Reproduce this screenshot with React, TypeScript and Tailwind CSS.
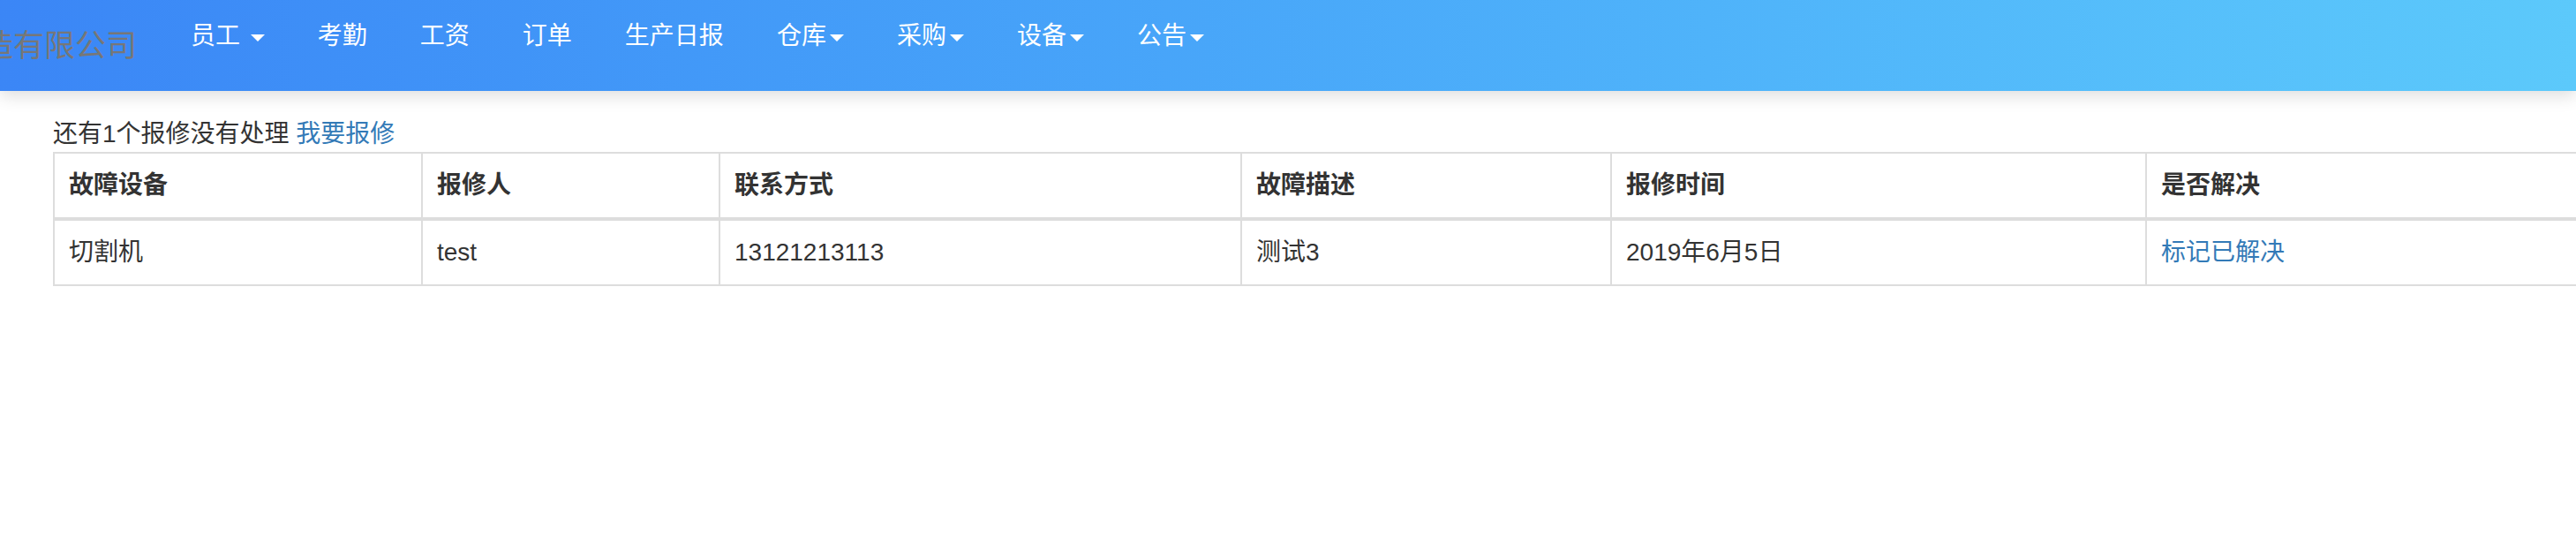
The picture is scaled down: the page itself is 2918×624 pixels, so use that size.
import React from "react";

const navItems: { label: string; caret: boolean; space?: boolean }[] = [
  { label: "员工", caret: true, space: true },
  { label: "考勤", caret: false },
  { label: "工资", caret: false },
  { label: "订单", caret: false },
  { label: "生产日报", caret: false },
  { label: "仓库", caret: true },
  { label: "采购", caret: true },
  { label: "设备", caret: true },
  { label: "公告", caret: true },
];

function Caret() {
  return (
    <span className="ml-[4px] inline-block h-0 w-0 border-x-[8px] border-t-[8px] border-x-transparent border-t-white align-middle" />
  );
}

export default function App() {
  return (
    <div
      className="min-h-[624px] w-full overflow-hidden bg-white text-[28px] text-[#333]"
      style={{ fontFamily: '"Liberation Sans", "Noto Sans CJK SC", sans-serif' }}
    >
      <nav className="relative z-10 flex h-[103px] bg-gradient-to-r from-[#3b86f6] to-[#5cc9fb] shadow-[0_6px_18px_rgba(0,0,0,0.13)]">
        <div className="ml-[-55px] shrink-0 whitespace-nowrap pr-[31px] pt-[32px] text-[35px] leading-[40px] text-[#777]">
          制造有限公司
        </div>
        <ul className="flex">
          {navItems.map((item) => (
            <li key={item.label}>
              <a className="block whitespace-nowrap px-[30px] pt-[21px] leading-[40px] text-white">
                {item.label}
                {item.space ? " " : ""}
                {item.caret ? <Caret /> : null}
              </a>
            </li>
          ))}
        </ul>
      </nav>

      <div className="pt-[29px]">
        <p className="pl-[60px] leading-[40px]">
          还有1个报修没有处理 <a className="text-[#337ab7]">我要报修</a>
        </p>
        <table className="ml-[60px] w-[3000px] table-fixed border-separate border-spacing-0 leading-[40px]">
          <colgroup>
            <col className="w-[419px]" />
            <col className="w-[337px]" />
            <col className="w-[591px]" />
            <col className="w-[419px]" />
            <col className="w-[606px]" />
            <col />
          </colgroup>
          <thead>
            <tr>
              {["故障设备", "报修人", "联系方式", "故障描述", "报修时间", "是否解决"].map((h, i) => (
                <th
                  key={h}
                  className={
                    "border-t-2 border-r-2 border-b-4 border-[#ddd] px-[16px] py-[16px] text-left font-bold " +
                    (i === 0 ? "border-l-2" : "")
                  }
                >
                  {h}
                </th>
              ))}
            </tr>
          </thead>
          <tbody>
            <tr>
              <td className="border-l-2 border-r-2 border-b-2 border-[#ddd] px-[16px] py-[16px]">切割机</td>
              <td className="border-r-2 border-b-2 border-[#ddd] px-[16px] py-[16px]">test</td>
              <td className="border-r-2 border-b-2 border-[#ddd] px-[16px] py-[16px]">13121213113</td>
              <td className="border-r-2 border-b-2 border-[#ddd] px-[16px] py-[16px]">测试3</td>
              <td className="border-r-2 border-b-2 border-[#ddd] px-[16px] py-[16px]">2019年6月5日</td>
              <td className="border-r-2 border-b-2 border-[#ddd] px-[16px] py-[16px]">
                <a className="text-[#337ab7]">标记已解决</a>
              </td>
            </tr>
          </tbody>
        </table>
      </div>
    </div>
  );
}
